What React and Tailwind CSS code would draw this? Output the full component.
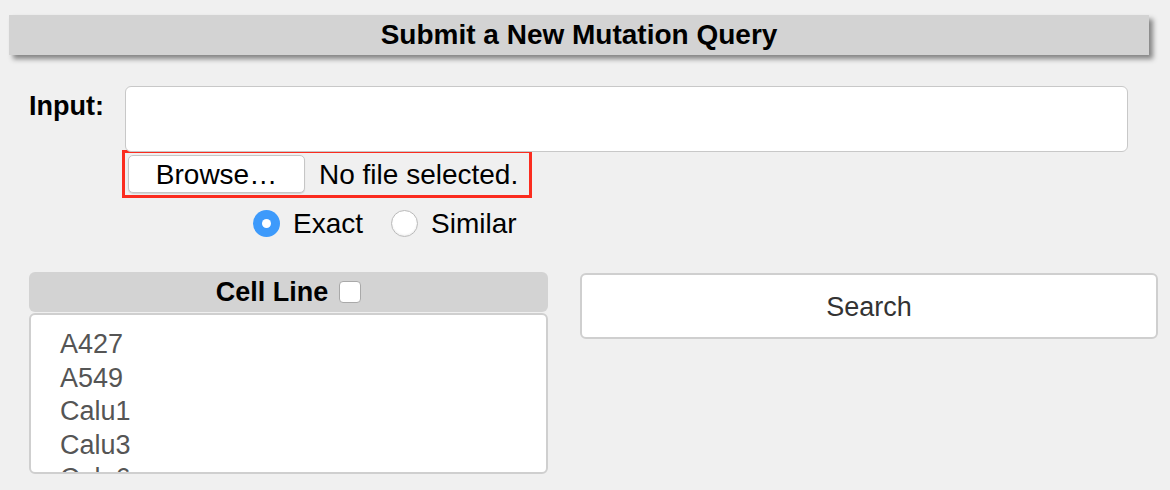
export default function App() {
  const items = ["A427", "A549", "Calu1", "Calu3", "Calu6"];
  return (
    <div className="min-h-[490px] w-[1170px] overflow-hidden bg-[#f0f0f0] pt-[15px] font-['Liberation_Sans',Arial,sans-serif] text-black">
      <div className="ml-[9px] flex h-[40px] w-[1140px] items-center justify-center bg-[#d3d3d3] text-[28px] font-bold leading-none shadow-[4px_4px_5px_rgba(0,0,0,0.45)]">
        Submit a New Mutation Query
      </div>

      <div className="mt-[31px] flex">
        <div className="w-[125px] pl-[29px] pt-[7px] text-[27px] font-bold leading-[27px]">Input:</div>
        <div className="h-[66px] w-[1003px] rounded-[6px] border border-[#c8c8c8] bg-white"></div>
      </div>

      <div className="ml-[122px] mt-[-2px] flex h-[48px] w-[410px] items-center border-[3px] border-[#fb2c1f] pl-[3px]">
        <div className="flex h-[38px] w-[177px] items-center justify-center rounded-[5px] border border-[#c6c6c6] bg-white pt-[2px] text-[28px] leading-none shadow-[0_1px_1px_rgba(0,0,0,0.12)]">
          Browse…
        </div>
        <span className="ml-[14px] pt-[2px] text-[28px] leading-none">No file selected.</span>
      </div>

      <div className="ml-[253px] mt-[12px] flex h-[27px] items-center">
        <div className="flex h-[27px] w-[27px] items-center justify-center rounded-full bg-[#3d9afb]">
          <div className="h-[9px] w-[9px] rounded-full bg-white"></div>
        </div>
        <span className="ml-[13px] text-[28px] leading-none">Exact</span>
        <div className="ml-[28px] h-[27px] w-[27px] rounded-full border border-[#b9b9b9] bg-white shadow-[inset_0_-1px_2px_rgba(0,0,0,0.08)]"></div>
        <span className="ml-[13px] text-[28px] leading-none">Similar</span>
      </div>

      <div className="mt-[35px] flex items-start">
        <div className="ml-[29px] w-[519px]">
          <div className="flex h-[40px] items-center justify-center rounded-[6px] bg-[#d3d3d3]">
            <span className="text-[27px] font-bold leading-none">Cell Line</span>
            <div className="ml-[11px] h-[22px] w-[22px] rounded-[4px] border border-[#a9a9a9] bg-white"></div>
          </div>
          <div className="mt-[1px] h-[161px] overflow-hidden rounded-[6px] border-2 border-[#cfcfcf] bg-white pl-[29px] pt-[13px]">
            {items.map((it) => (
              <div key={it} className="text-[27px] leading-[33.5px] text-[#555555]">
                {it}
              </div>
            ))}
          </div>
        </div>
        <div className="ml-[32px] mt-[1px] flex h-[66px] w-[578px] items-center justify-center rounded-[6px] border-2 border-[#cfcfcf] bg-white pt-[2px] text-[27px] leading-none text-[#333333]">
          Search
        </div>
      </div>
    </div>
  );
}
